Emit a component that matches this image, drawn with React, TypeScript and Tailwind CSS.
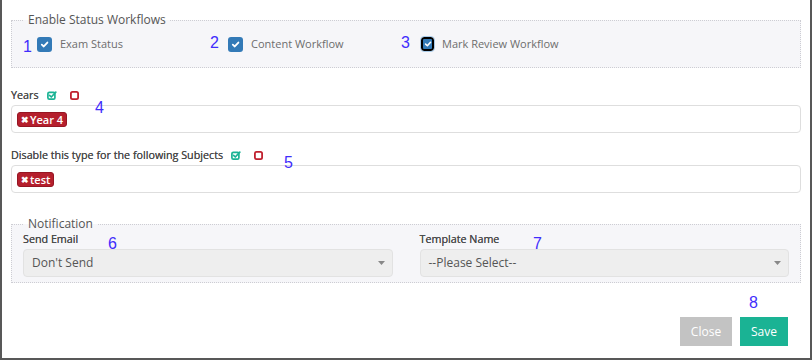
import React from 'react'

const Check = ({ size = 9 }: { size?: number }) => (
  <svg width={size} height={size} viewBox="0 0 10 10" fill="none">
    <path d="M2 5.2 L4.2 7.2 L8.2 2.8" stroke="#fff" strokeWidth="2" strokeLinecap="round" strokeLinejoin="round" />
  </svg>
)

const CheckSquareIcon = () => (
  <svg width="10" height="9" viewBox="0 0 10 9" fill="none">
    <rect x="0.9" y="1.4" width="7" height="6.7" rx="1.4" stroke="#1ab394" strokeWidth="1.7" />
    <path d="M2.6 4.4 L4.3 6 L8.8 1.2" stroke="#1ab394" strokeWidth="1.7" strokeLinecap="round" strokeLinejoin="round" />
  </svg>
)

const SquareIcon = () => (
  <svg width="9" height="9" viewBox="0 0 9 9" fill="none">
    <rect x="0.9" y="0.9" width="7.2" height="7.2" rx="1.6" stroke="#c0202e" strokeWidth="1.8" />
  </svg>
)

const Caret = () => (
  <svg width="7" height="4" viewBox="0 0 7 4">
    <path d="M0 0 H7 L3.5 4 Z" fill="#888" />
  </svg>
)

// blue annotation numbers laid over the form
const Marker = ({ n, className }: { n: number; className: string }) => (
  <span className={`absolute font-['Liberation_Sans',sans-serif] text-[16px] leading-none text-[#3f2dfc] ${className}`}>
    {n}
  </span>
)

function Tag({ label }: { label: string }) {
  return (
    <span className="inline-flex items-center h-[15px] px-[3px] rounded-[3px] bg-[#b51f2d] border border-[#961623] text-white text-[11px] font-semibold leading-none">
      <span className="text-[9px] mr-px">✖</span>
      {label}
    </span>
  )
}

function CheckItem({ label, focused, width }: { label: string; focused?: boolean; width: string }) {
  return (
    <div className={`flex items-center gap-2 ${width}`}>
      {focused ? (
        <span className="flex items-center justify-center w-[13px] h-[14px] rounded-[3px] border-2 border-black bg-[#337ab7] outline outline-1 outline-[#a9cbe9]">
          <Check size={8} />
        </span>
      ) : (
        <span className="flex items-center justify-center w-[15px] h-[15px] rounded-[3px] bg-[#337ab7]">
          <Check />
        </span>
      )}
      <span className="text-[11px] text-[#6d6d6d]">{label}</span>
    </div>
  )
}

function TagField({ label, tag, iconGap }: { label: string; tag: string; iconGap: string }) {
  return (
    <>
      <div className="flex items-center h-[14px] text-[10.75px] leading-[14px] text-[#4a4a4a] [text-shadow:0_0_0.3px_#4a4a4a]">
        <span>{label}</span>
        <span className={iconGap}><CheckSquareIcon /></span>
        <span className="ml-[13px]"><SquareIcon /></span>
      </div>
      <div className="mt-[3px] h-[28px] flex items-center pl-[5px] bg-white border border-[#dedede] rounded">
        <Tag label={tag} />
      </div>
    </>
  )
}

function SelectBox({ label, value }: { label: string; value: string }) {
  return (
    <div>
      <div className="h-[14px] text-[10.75px] leading-[14px] text-[#4a4a4a] [text-shadow:0_0_0.3px_#4a4a4a]">{label}</div>
      <div className="mt-[3px] h-[28px] flex items-center justify-between pl-2 pr-[7px] bg-[#eeeeee] border border-[#e2e2e2] rounded text-[12px] text-[#555]">
        <span>{value}</span>
        <Caret />
      </div>
    </div>
  )
}

export default function App() {
  return (
    <div className="relative w-[812px] h-[360px] overflow-hidden bg-white border-l-2 border-r-2 border-b-2 border-[#585858] px-[9px] pt-[12px] font-['Open_Sans',sans-serif]">
      <fieldset className="border border-dotted border-[#cdcdd3] bg-[#f6f6f9] pb-[15px]">
        <legend className="ml-3 px-1 text-[12px] leading-[16px] text-[#555]">Enable Status Workflows</legend>
        <div className="mt-2 flex items-center h-4 pl-[25px]">
          <CheckItem label="Exam Status" width="w-[191px]" />
          <CheckItem label="Content Workflow" width="w-[193px]" />
          <CheckItem label="Mark Review Workflow" width="w-[200px]" focused />
        </div>
      </fieldset>

      <div className="mt-5">
        <TagField label="Years" tag="Year 4" iconGap="ml-2" />
      </div>
      <div className="mt-[15px]">
        <TagField label="Disable this type for the following Subjects" tag="test" iconGap="ml-2" />
      </div>

      <fieldset className="mt-[23px] border border-dotted border-[#cdcdd3] bg-[#f6f6f9] pb-[5px] px-[11px]">
        <legend className="ml-px px-1 text-[12px] leading-[16px] text-[#555]">Notification</legend>
        <div className="grid grid-cols-2 gap-[27px]">
          <SelectBox label="Send Email" value="Don't Send" />
          <SelectBox label="Template Name" value="--Please Select--" />
        </div>
      </fieldset>

      <div className="mt-[34px] flex justify-end gap-2 pr-[13px]">
        <button className="h-[29px] w-[52px] bg-[#c3c3c3] text-white text-[12px]">Close</button>
        <button className="h-[29px] w-[48px] bg-[#1ab394] text-white text-[12px]">Save</button>
      </div>

      <Marker n={1} className="left-[21px] top-[39px]" />
      <Marker n={2} className="left-[208px] top-[35px]" />
      <Marker n={3} className="left-[399px] top-[35px]" />
      <Marker n={4} className="left-[93px] top-[100px]" />
      <Marker n={5} className="left-[282px] top-[155px]" />
      <Marker n={6} className="left-[106px] top-[236px]" />
      <Marker n={7} className="left-[531px] top-[236px]" />
      <Marker n={8} className="left-[747px] top-[295px]" />
    </div>
  )
}
